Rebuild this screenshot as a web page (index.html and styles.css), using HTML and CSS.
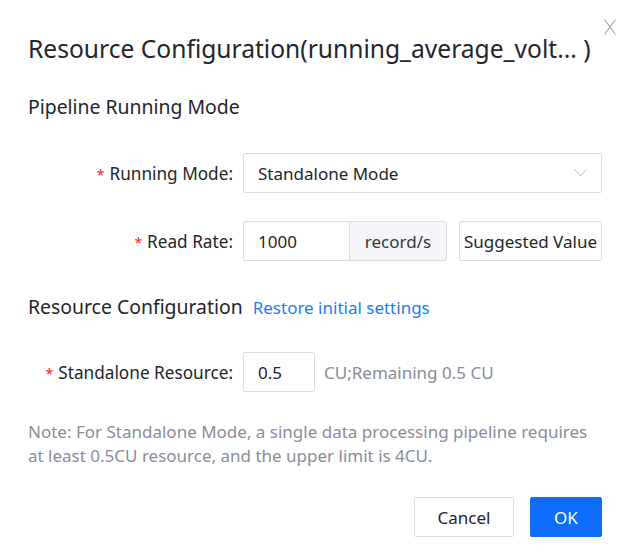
FILE: index.html
```html
<!DOCTYPE html>
<html>
<head>
<meta charset="utf-8">
<link rel="stylesheet" href="styles.css">
</head>
<body>
<div class="dialog">
  <button class="close" aria-label="Close">
    <svg width="12" height="16" viewBox="0 0 12 16"><path d="M0.5 0.5 L11.5 15.5 M11.5 0.5 L0.5 15.5" stroke="#a3a5b3" stroke-width="1.2" fill="none"/></svg>
  </button>
  <h1 class="title">Resource Configuration(running_average_volt... )</h1>
  <h2 class="section">Pipeline Running Mode</h2>
  <div class="form">
    <div class="row">
      <label class="label"><span class="req">*</span>Running Mode:</label>
      <div class="select">
        <span>Standalone Mode</span>
        <svg width="13" height="8" viewBox="0 0 13 8"><path d="M0.5 0.5 L6.5 7 L12.5 0.5" stroke="#b4b6c2" stroke-width="1" fill="none"/></svg>
      </div>
    </div>
    <div class="row">
      <label class="label"><span class="req">*</span>Read Rate:</label>
      <div class="group">
        <span class="inp rate">1000</span><span class="addon">record/s</span>
      </div>
      <button class="suggest">Suggested Value</button>
    </div>
  </div>
  <div class="section res-head">
    <span>Resource Configuration</span>
    <a class="link">Restore initial settings</a>
  </div>
  <div class="form">
    <div class="row">
      <label class="label"><span class="req">*</span>Standalone Resource:</label>
      <span class="inp small">0.5</span>
      <span class="hint">CU;Remaining 0.5 CU</span>
    </div>
  </div>
  <p class="note">Note: For Standalone Mode, a single data processing pipeline requires at least 0.5CU resource, and the upper limit is 4CU.</p>
  <div class="footer">
    <button class="btn cancel">Cancel</button>
    <button class="btn ok">OK</button>
  </div>
</div>
</body>
</html>
```
FILE: styles.css
```css
* { box-sizing: border-box; }
html, body { margin: 0; padding: 0; background: #fff; }
body {
  font-family: "Noto Sans", "Open Sans", sans-serif;
  color: #24252b;
  width: 630px;
  height: 553px;
  overflow: hidden;
}
.dialog {
  position: relative;
  padding: 31px 28px 0 28px;
}
.close {
  position: absolute;
  top: 19px;
  right: 14px;
  border: 0;
  background: none;
  padding: 0;
  line-height: 0;
}
.title {
  margin: 0;
  font-size: 24.6px;
  font-weight: 400;
  line-height: 36px;
}
.section {
  margin: 0;
  font-size: 19.4px;
  font-weight: 400;
  line-height: 26px;
}
h2.section { margin-top: 27px; }
.form { display: flex; flex-direction: column; gap: 28px; margin-top: 33px; }
.row { display: flex; align-items: center; height: 40px; }
.label {
  width: 215px;
  text-align: right;
  font-size: 17.2px;
  padding-right: 10px;
  white-space: nowrap;
}
.req { color: #f5222d; margin-right: 5px; font-size: 14px; }
.select {
  flex: 1;
  height: 40px;
  border: 1px solid #dcdde3;
  border-radius: 2px;
  display: flex;
  align-items: center;
  justify-content: space-between;
  padding: 0 14px 0 14px;
  font-size: 17px;
}
.group { display: flex; height: 40px; }
.inp {
  height: 40px;
  border: 1px solid #dcdde3;
  border-radius: 2px;
  display: flex;
  align-items: center;
  padding-left: 14px;
  font-size: 17px;
}
.rate { width: 106px; border-right: 0; border-radius: 2px 0 0 2px; }
.addon {
  width: 98px;
  height: 40px;
  border: 1px solid #dcdde3;
  border-radius: 0 2px 2px 0;
  background: #f5f5f9;
  display: flex;
  align-items: center;
  justify-content: center;
  font-size: 17px;
  color: #33353d;
}
.suggest {
  margin-left: 12px;
  flex: 1;
  height: 40px;
  border: 1px solid #dcdde3;
  border-radius: 2px;
  background: #fff;
  font-family: inherit;
  font-size: 17px;
  color: #24252b;
  padding: 0;
  white-space: nowrap;
}
.res-head { margin-top: 33px; display: flex; gap: 10px; align-items: baseline; }
.link { color: #1c7cf4; font-size: 17px; }
.res-head + .form { margin-top: 31px; }
.small { width: 72px; }
.hint { margin-left: 9px; color: #8a8d99; font-size: 17px; }
.note {
  margin: 28px 0 0 0;
  color: #8a8d99;
  font-size: 17px;
  line-height: 24px;
}
.footer {
  display: flex;
  justify-content: flex-end;
  gap: 16px;
  margin-top: 29px;
}
.btn {
  height: 40px;
  border-radius: 2px;
  font-family: inherit;
  font-size: 17px;
  padding: 0;
}
.cancel { width: 100px; background: #fff; border: 1px solid #dcdde3; color: #24252b; }
.ok { width: 72px; background: #0d6efd; border: 1px solid #0d6efd; color: #fff; }
```
